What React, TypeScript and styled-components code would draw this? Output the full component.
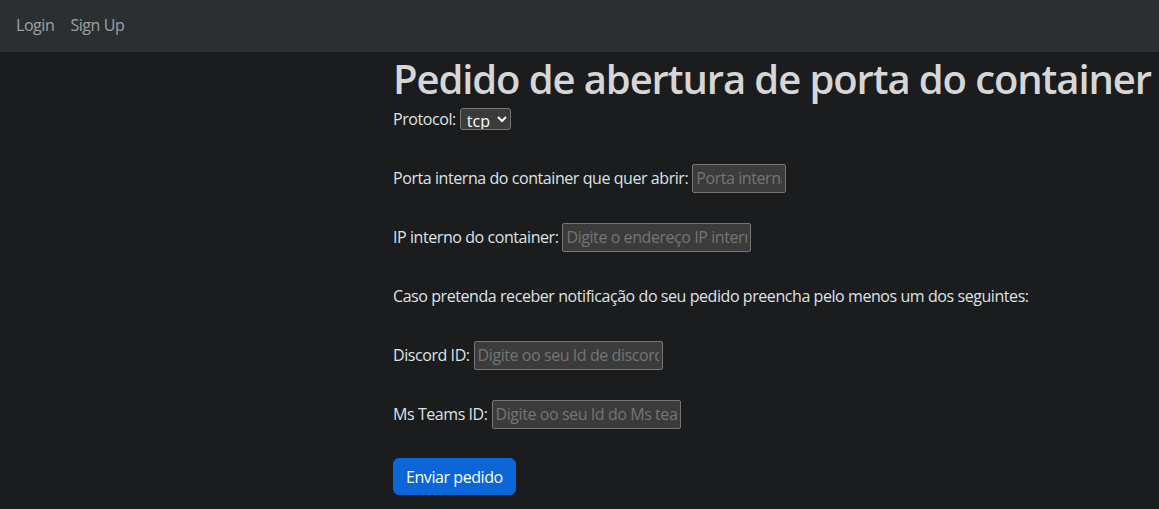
import React from "react";
import styled, { createGlobalStyle } from "styled-components";

const GlobalStyle = createGlobalStyle`
  html, body {
    margin: 0;
    padding: 0;
    background: #1b1c1e;
  }
  body {
    font-family: "Open Sans", "Noto Sans", sans-serif;
    font-size: 16px;
    letter-spacing: -0.43px;
    color: #dee2e6;
  }
`;

const Navbar = styled.nav`
  height: 52px;
  background: #2c2f32;
  display: flex;
  align-items: center;
  padding: 0 16px 2px;
  gap: 16px;
  box-sizing: border-box;
`;

const NavLink = styled.a`
  color: rgba(255, 255, 255, 0.55);
  text-decoration: none;
  font-size: 16px;
  cursor: pointer;
`;

const Main = styled.main`
  padding: 3px 0 0 393px;
`;

const Title = styled.h1`
  margin: 0;
  font-size: 40px;
  font-weight: 600;
  line-height: 48px;
  letter-spacing: -1.1px;
  color: #d6d6d6;
  white-space: nowrap;
`;

const Form = styled.form`
  display: flex;
  flex-direction: column;
  gap: 29px;
  margin-top: 1px;
`;

const Row = styled.div`
  height: 30px;
  display: flex;
  align-items: center;
  gap: 4px;
  white-space: nowrap;
`;

const Select = styled.select`
  height: 22px;
  width: 51px;
  background: #3b3b3b;
  color: #fff;
  border: 1px solid #767676;
  border-radius: 3px;
  font: inherit;
  font-size: 16px;
  letter-spacing: 0;
  padding: 0 2px;
  color-scheme: dark;
`;

const Input = styled.input<{ $w: number }>`
  width: ${(p) => p.$w}px;
  height: 29px;
  box-sizing: border-box;
  background: #3b3b3b;
  color: #fff;
  border: 1px solid #767676;
  border-radius: 2px;
  font: inherit;
  font-size: 16px;
  letter-spacing: inherit;
  padding: 1px 3px;
  &::placeholder {
    color: #757575;
  }
`;

const Button = styled.button`
  align-self: flex-start;
  height: 37px;
  padding: 0 12px;
  background: #0b66d7;
  color: #fff;
  border: 1px solid #0b66d7;
  border-radius: 6px;
  font: inherit;
  font-size: 16px;
  letter-spacing: inherit;
  cursor: pointer;
`;

export default function App() {
  return (
    <>
      <GlobalStyle />
      <Navbar>
        <NavLink>Login</NavLink>
        <NavLink>Sign Up</NavLink>
      </Navbar>
      <Main>
        <Title>Pedido de abertura de porta do container</Title>
        <Form onSubmit={(e) => e.preventDefault()}>
          <Row>
            Protocol:
            <Select defaultValue="tcp">
              <option value="tcp">tcp</option>
              <option value="udp">udp</option>
            </Select>
          </Row>
          <Row>
            Porta interna do container que quer abrir:
            <Input $w={94} placeholder="Porta interna" />
          </Row>
          <Row>
            IP interno do container:
            <Input $w={189} placeholder="Digite o endereço IP interno" />
          </Row>
          <Row>
            Caso pretenda receber notificação do seu pedido preencha pelo menos um dos seguintes:
          </Row>
          <Row>
            Discord ID:
            <Input $w={189} placeholder="Digite oo seu Id de discord" />
          </Row>
          <Row>
            Ms Teams ID:
            <Input $w={189} placeholder="Digite oo seu Id do Ms teams" />
          </Row>
          <Button type="submit">Enviar pedido</Button>
        </Form>
      </Main>
    </>
  );
}
